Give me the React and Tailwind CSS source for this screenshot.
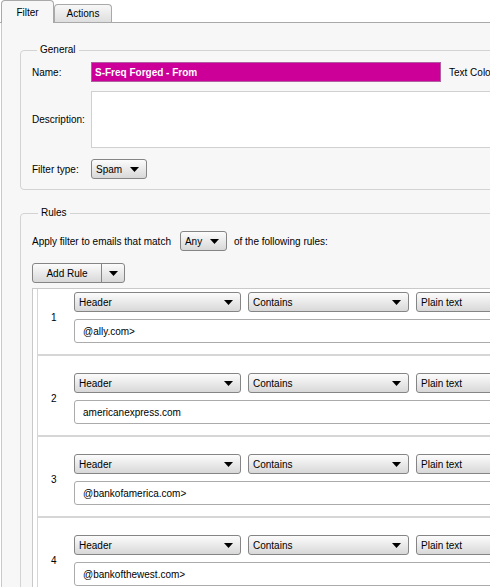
import React from 'react';

const rules = ['@ally.com>', 'americanexpress.com', '@bankofamerica.com>', '@bankofthewest.com>'];

const Arrow = () => (
  <svg width="9" height="5" viewBox="0 0 9 5" className="shrink-0">
    <path d="M0 0h9L4.5 5z" fill="#000" />
  </svg>
);

const Dropdown = ({ label, className = '' }) => (
  <div
    className={`flex h-[20px] shrink-0 items-center justify-between rounded-[3px] border border-[#858585] bg-linear-to-b from-[#fcfcfc] to-[#d8d8d8] pl-[4px] pr-[7px] ${className}`}
  >
    <span>{label}</span>
    <Arrow />
  </div>
);

const RuleRow = ({ num, value }) => (
  <div className="ml-[4px] flex items-center border-y border-l border-[#d6d6d6] bg-white pt-[17px] pb-[11px]">
    <div className="w-[36px] pl-[13px]">{num}</div>
    <div className="flex flex-1 flex-col gap-[7px]">
      <div className="flex gap-[7px]">
        <Dropdown label="Header" className="w-[167px]" />
        <Dropdown label="Contains" className="w-[161px]" />
        <Dropdown label="Plain text" className="w-[140px]" />
      </div>
      <div className="flex h-[24px] items-center rounded-[3px] border border-[#ababab] bg-white pl-[8px]">{value}</div>
    </div>
  </div>
);

export default function App() {
  return (
    <div className="h-[587px] w-[490px] overflow-hidden bg-white font-['Liberation_Sans',Arial,sans-serif] text-[10px] text-black">
      <div className="w-[580px]">
        {/* Tabs */}
        <div className="flex h-[23px] items-end border-b border-[#a9a9a9] pl-[1px]">
          <div className="relative -mb-px flex h-[23px] w-[53px] items-center justify-center rounded-t-[4px] border border-b-0 border-[#a9a9a9] bg-[#f7f7f7]">
            Filter
          </div>
          <div className="flex h-[18px] w-[58px] items-center justify-center rounded-t-[4px] border border-b-0 border-[#a9a9a9] bg-linear-to-b from-[#f8f8f8] to-[#dedede]">
            Actions
          </div>
        </div>

        {/* Panel */}
        <div className="ml-[1px] h-[564px] border-l border-[#c9c9c9] bg-[#f7f7f7] pt-[21px] pl-[18px]">
          <fieldset className="rounded-[4px] border border-[#d3d3d3] pb-[10px] pl-[11px]">
            <legend className="ml-[5px] px-[3px] leading-[12px]">General</legend>
            <div className="mt-[6px] flex items-center">
              <span className="w-[59px]">Name:</span>
              <div className="flex h-[20px] w-[350px] items-center border border-[#b060a0] bg-[#cc0099] pl-[3px] font-bold text-white">
                S-Freq Forged - From
              </div>
              <span className="ml-[8px]">Text Color</span>
            </div>
            <div className="mt-[9px] flex items-center">
              <span className="w-[59px]">Description:</span>
              <div className="h-[57px] flex-1 border border-[#d0d0d0] bg-white" />
            </div>
            <div className="mt-[11px] flex items-center">
              <span className="w-[59px]">Filter type:</span>
              <Dropdown label="Spam" className="w-[56px]" />
            </div>
          </fieldset>

          <fieldset className="mt-[17px] h-[400px] rounded-[4px] border border-[#d3d3d3] pl-[11px]">
            <legend className="ml-[6px] px-[3px] leading-[12px]">Rules</legend>
            <div className="mt-[12px] flex items-center">
              <span>Apply filter to emails that match</span>
              <Dropdown label="Any" className="ml-[9px] w-[47px]" />
              <span className="ml-[7px]">of the following rules:</span>
            </div>
            <div className="mt-[12px] flex h-[20px] w-[93px] rounded-[3px] border border-[#858585] bg-linear-to-b from-[#fcfcfc] to-[#d8d8d8]">
              <div className="flex w-[69px] items-center justify-center border-r border-[#858585]">Add Rule</div>
              <div className="flex flex-1 items-center justify-center">
                <Arrow />
              </div>
            </div>
            <div className="mt-[5px] h-[320px] overflow-hidden border border-[#c9c9c9] bg-white">
              <div className="-mt-[15px]">
                {rules.map((r, i) => (
                  <RuleRow key={r} num={i + 1} value={r} />
                ))}
              </div>
            </div>
          </fieldset>
        </div>
      </div>
    </div>
  );
}
